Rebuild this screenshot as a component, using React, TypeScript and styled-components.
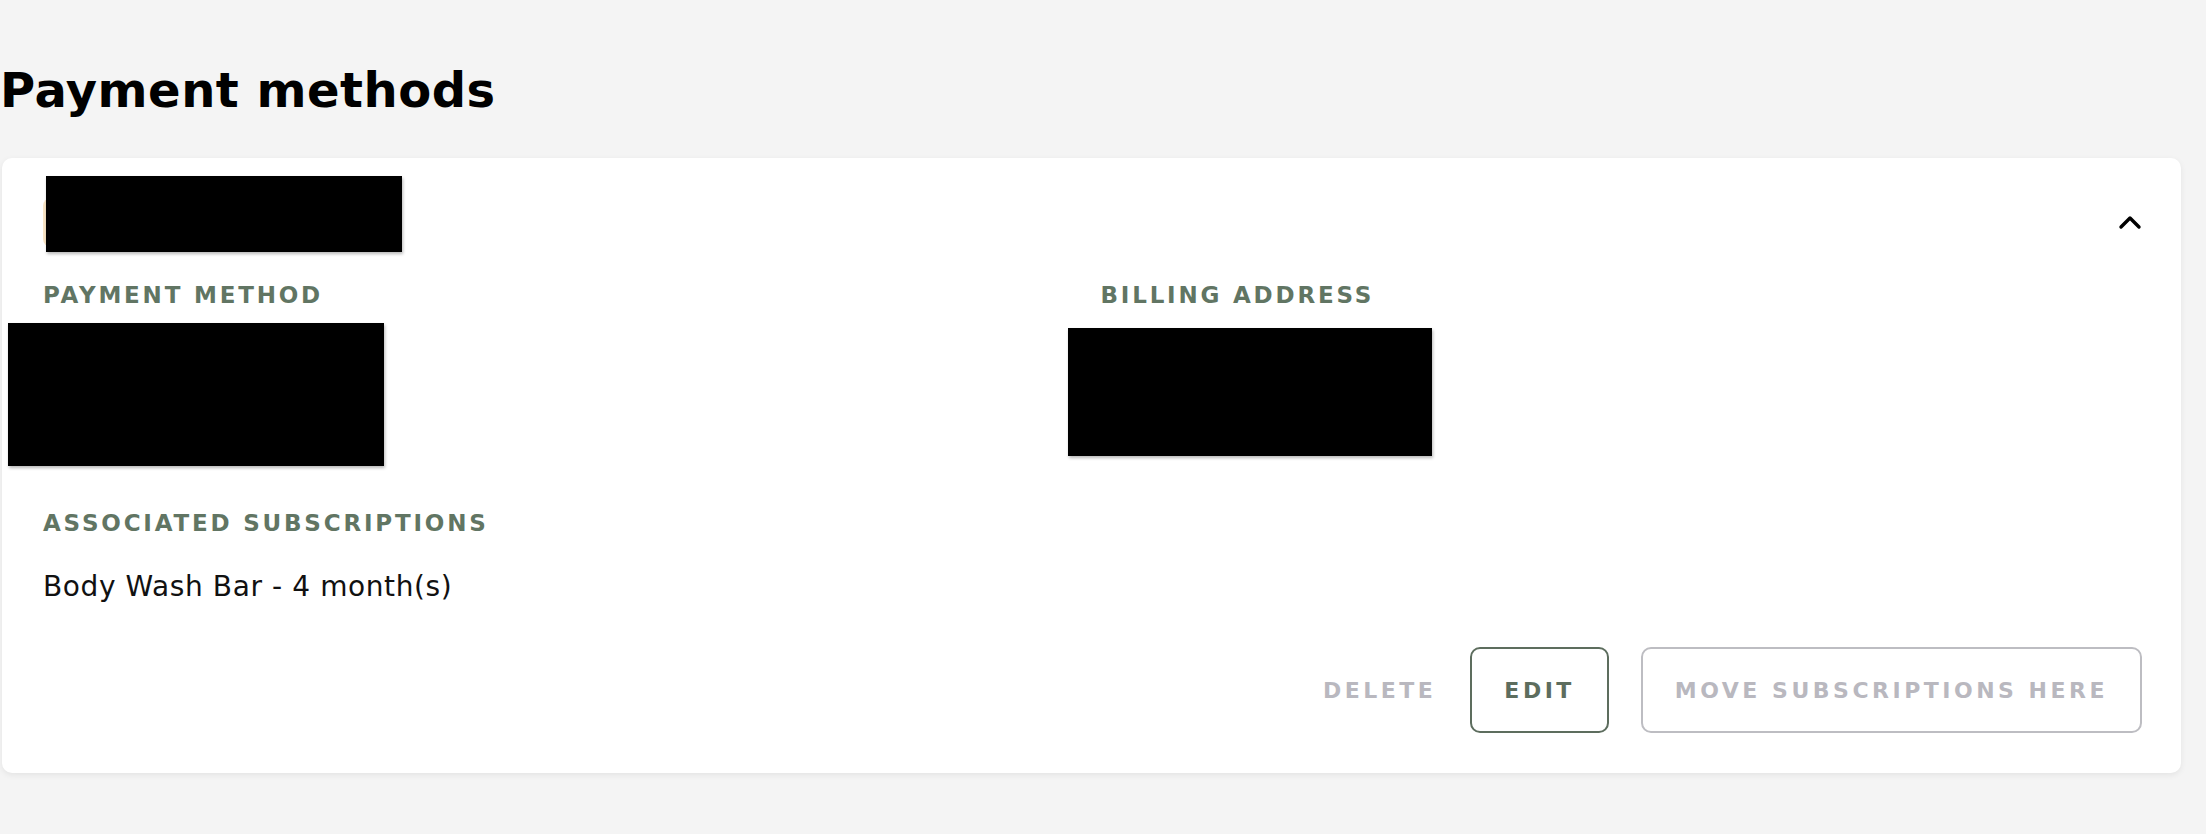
import styled, { createGlobalStyle } from "styled-components";

const GlobalStyle = createGlobalStyle`
  html, body {
    margin: 0;
    padding: 0;
    background: #f4f4f4;
  }
  body {
    font-family: "DejaVu Sans", "Liberation Sans", sans-serif;
    color: #111111;
  }
`;

const Page = styled.div`
  min-height: 100vh;
  box-sizing: border-box;
  padding: 62px 25px 40px 2px;
`;

const Title = styled.h1`
  margin: 0 0 38px -2px;
  font-size: 48px;
  line-height: 1.2;
  font-weight: 700;
  letter-spacing: 0.5px;
  color: #000000;
`;

const Card = styled.section`
  background: #ffffff;
  border-radius: 10px;
  box-shadow: 0 2px 6px rgba(0, 0, 0, 0.07);
  padding: 40px 39px 40px 41px;
`;

const Header = styled.div`
  position: relative;
  display: flex;
  align-items: center;
  justify-content: space-between;
  height: 49px;
`;

const BrandPill = styled.div`
  width: 72px;
  height: 49px;
  border-radius: 8px;
  background: #f7e3c4;
`;

const Redaction = styled.div<{ $left: number; $top: number; $w: number; $h: number }>`
  position: absolute;
  left: ${(p) => p.$left}px;
  top: ${(p) => p.$top}px;
  width: ${(p) => p.$w}px;
  height: ${(p) => p.$h}px;
  background: #000000;
  box-shadow: 1px 2px 3px rgba(0, 0, 0, 0.28);
`;

const ToggleButton = styled.button`
  display: flex;
  align-items: center;
  justify-content: center;
  padding: 0;
  border: none;
  background: none;
  cursor: pointer;
`;

const Details = styled.div`
  display: grid;
  grid-template-columns: 1fr 1fr;
  column-gap: 16px;
  margin-top: 35px;
`;

const Column = styled.div`
  display: flex;
  flex-direction: column;
`;

const Label = styled.div`
  font-size: 23px;
  line-height: 1.2;
  font-weight: 700;
  letter-spacing: 2.8px;
  text-transform: uppercase;
  color: #617563;
`;

const Hidden = styled.div`
  position: relative;
  margin-top: 14px;
  height: 143px;
`;

const Section = styled.div`
  margin-top: 44px;
`;

const SubscriptionText = styled.p`
  margin: 32px 0 0;
  font-size: 28px;
  line-height: 1.2;
  letter-spacing: 0.6px;
  color: #111111;
`;

const Actions = styled.div`
  display: flex;
  justify-content: flex-end;
  align-items: center;
  gap: 32px;
  margin-top: 44px;
`;

const ActionButton = styled.button<{ $variant: "text" | "primary" | "disabled" }>`
  box-sizing: border-box;
  height: 86px;
  padding: ${(p) => (p.$variant === "text" ? "0" : "0 32px")};
  border-radius: 10px;
  border: 2px solid
    ${(p) =>
      p.$variant === "primary"
        ? "#5d6d5e"
        : p.$variant === "disabled"
        ? "#bdbdc2"
        : "transparent"};
  background: #ffffff;
  font-family: "DejaVu Sans", "Liberation Sans", sans-serif;
  font-size: 22px;
  font-weight: 700;
  letter-spacing: 3.5px;
  text-transform: uppercase;
  color: ${(p) => (p.$variant === "primary" ? "#5d6d5e" : "#b9b8bf")};
  cursor: ${(p) => (p.$variant === "primary" ? "pointer" : "default")};
`;

const ChevronUp = () => (
  <svg width="24" height="16" viewBox="0 0 24 16" fill="none">
    <polyline
      points="3,13 12,4 21,13"
      stroke="#000000"
      strokeWidth="3.4"
      strokeLinecap="round"
      strokeLinejoin="round"
    />
  </svg>
);

export default function App() {
  return (
    <>
      <GlobalStyle />
      <Page>
        <Title>Payment methods</Title>
        <Card>
          <Header>
            <BrandPill />
            <Redaction $left={3} $top={-22} $w={356} $h={76} />
            <ToggleButton aria-label="Collapse">
              <ChevronUp />
            </ToggleButton>
          </Header>

          <Details>
            <Column>
              <Label>Payment method</Label>
              <Hidden>
                <Redaction $left={-35} $top={0} $w={376} $h={143} />
              </Hidden>
            </Column>
            <Column>
              <Label>Billing address</Label>
              <Hidden>
                <Redaction $left={-33} $top={5} $w={364} $h={128} />
              </Hidden>
            </Column>
          </Details>

          <Section>
            <Label>Associated subscriptions</Label>
            <SubscriptionText>Body Wash Bar - 4 month(s)</SubscriptionText>
          </Section>

          <Actions>
            <ActionButton $variant="text" disabled>
              Delete
            </ActionButton>
            <ActionButton $variant="primary">Edit</ActionButton>
            <ActionButton $variant="disabled" disabled>
              Move subscriptions here
            </ActionButton>
          </Actions>
        </Card>
      </Page>
    </>
  );
}
